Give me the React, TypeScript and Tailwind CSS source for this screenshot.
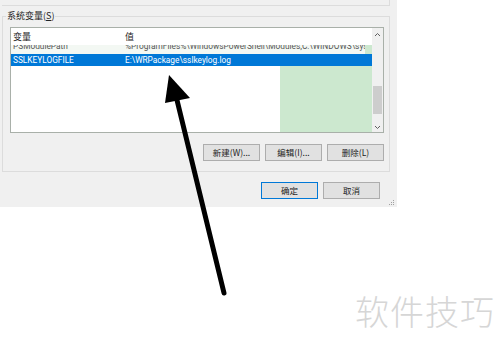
import React from "react";

const cjk = { fontFamily: '"Noto Sans CJK SC", "Noto Sans", sans-serif' };
const lat = { fontFamily: 'Roboto, "Noto Sans CJK SC", sans-serif' };

function Btn({ children, primary }: { children: React.ReactNode; primary?: boolean }) {
  return (
    <div
      className={`w-[57px] h-[17px] flex items-center justify-center bg-[#e1e1e1] border text-[8.5px] text-[#222] leading-none ${
        primary ? "border-[#0078d7]" : "border-[#adadad]"
      }`}
      style={cjk}
    >
      {children}
    </div>
  );
}

export default function App() {
  return (
    <div className="relative w-[500px] h-[351px] bg-white overflow-hidden">
      <div className="w-[397px] h-[207px] bg-[#f0f0f0] flex flex-col relative">
        <div className="h-[6px] ml-[2px] w-[388px] border-b border-r border-[#dcdcdc]" />
        <div className="relative mt-[10px] ml-[2px] w-[388px] h-[156px] border border-[#dcdcdc] pt-[10px] pl-[7px] pr-[5px]">
          <div
            className="absolute left-[3px] top-[-8px] bg-[#f0f0f0] px-[1px] text-[9px] leading-[14px] text-[#222]"
            style={cjk}
          >
            系统变量(<span className="underline">S</span>)
          </div>
          <div className="h-[106px] w-[374px] border border-[#a9b0a9] bg-white flex">
            <div className="flex-1 flex flex-col min-w-0">
              <div className="h-[17px] flex items-center text-[9px] text-[#222] shrink-0" style={cjk}>
                <div className="w-[114px] pl-[2px]">变量</div>
                <div>值</div>
              </div>
              <div className="h-[9px] overflow-hidden shrink-0 bg-[#f3f8f3] relative">
                <div
                  className="flex text-[8.3px] leading-[12px] text-[#555] whitespace-nowrap -mt-[5px]"
                  style={lat}
                >
                  <div className="w-[114px] shrink-0 pl-[2px] overflow-hidden">PSModulePath</div>
                  <div className="overflow-hidden">%ProgramFiles%\WindowsPowerShell\Modules;C:\WINDOWS\system32\WindowsPowerShell\v1.0\Modules</div>
                </div>
                <div className="absolute right-0 top-[-3px] w-[7px] h-[12px] bg-[#cce8cf]" />
              </div>
              <div
                className="h-[12px] shrink-0 bg-[#0078d7] flex items-center text-[8.3px] text-white whitespace-nowrap"
                style={lat}
              >
                <div className="w-[114px] pl-[2px]">SSLKEYLOGFILE</div>
                <div>E:\WRPackage\sslkeylog.log</div>
              </div>
              <div className="flex-1 flex">
                <div className="w-[269px] bg-white" />
                <div className="flex-1 bg-[#cce8cf]" />
              </div>
            </div>
            <div className="w-[11px] bg-[#f0f0f0] flex flex-col items-center">
              <div className="h-[12px] flex items-center justify-center">
                <svg width="7" height="5" viewBox="0 0 7 5">
                  <path d="M1 4 L3.5 1.5 L6 4" fill="none" stroke="#606060" strokeWidth="1" />
                </svg>
              </div>
              <div className="flex-1 w-full flex flex-col justify-end">
                <div className="h-[28px] mx-[1px] bg-[#cdcdcd] mb-[8px]" />
              </div>
              <div className="h-[10px] flex items-center justify-center">
                <svg width="7" height="5" viewBox="0 0 7 5">
                  <path d="M1 1 L3.5 3.5 L6 1" fill="none" stroke="#606060" strokeWidth="1" />
                </svg>
              </div>
            </div>
          </div>
          <div className="mt-[11px] flex justify-end gap-[5px]">
            <Btn>新建(W)...</Btn>
            <Btn>编辑(I)...</Btn>
            <Btn>删除(L)</Btn>
          </div>
        </div>
        <div className="mt-[10px] flex justify-end gap-[5px] pr-[17px]">
          <Btn primary>确定</Btn>
          <Btn>取消</Btn>
        </div>
        <svg className="absolute right-[2px] bottom-[1px]" width="6" height="6" viewBox="0 0 6 6">
          <rect x="4" y="0" width="1" height="1" fill="#a0a0a0" />
          <rect x="2" y="2" width="1" height="1" fill="#a0a0a0" />
          <rect x="4" y="2" width="1" height="1" fill="#a0a0a0" />
          <rect x="0" y="4" width="1" height="1" fill="#a0a0a0" />
          <rect x="2" y="4" width="1" height="1" fill="#a0a0a0" />
          <rect x="4" y="4" width="1" height="1" fill="#a0a0a0" />
        </svg>
      </div>

      <svg className="absolute left-0 top-0 pointer-events-none" width="500" height="351" viewBox="0 0 500 351">
        <line x1="224" y1="293" x2="176" y2="96" stroke="#000" strokeWidth="5" strokeLinecap="round" />
        <polygon points="169,75 165,103 190,98" fill="#000" />
      </svg>

      <div
        className="absolute left-[355px] top-[289px] text-[34px] leading-[44px] font-light text-[#d6d6d6] tracking-[1px]"
        style={cjk}
      >
        软件技巧
      </div>
    </div>
  );
}
